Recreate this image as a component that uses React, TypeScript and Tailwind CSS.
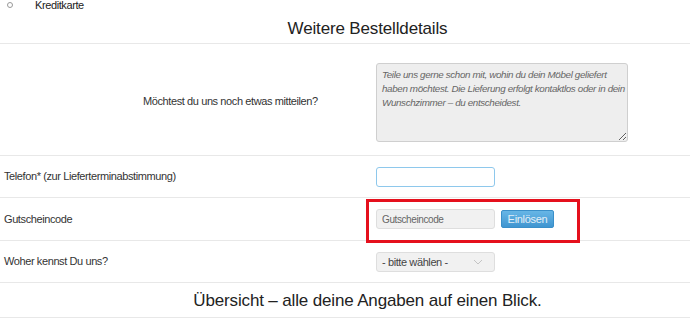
import React from "react";

const rowLine = "border-b border-[#e8e8e8]";
const heading = "text-center text-[17px] leading-[22px] tracking-[-0.15px] text-[#222]";

const messageHint =
  "Teile uns gerne schon mit, wohin du dein Möbel geliefert\nhaben möchtest. Die Lieferung erfolgt kontaktlos oder in dein\nWunschzimmer – du entscheidest.";

function Chevron() {
  return (
    <svg width="10" height="6" viewBox="0 0 10 6" className="shrink-0">
      <path d="M1 1l4 4 4-4" fill="none" stroke="#c4c4c4" strokeWidth="1" />
    </svg>
  );
}

export default function App() {
  return (
    <div className="w-[690px] h-[330px] overflow-hidden bg-white text-[#333] font-['Liberation_Sans',Arial,sans-serif] text-[11px] tracking-[-0.4px]">
      {/* payment option, cut off at the top */}
      <div className="flex items-center h-[12px] leading-[12px]">
        <span className="ml-[7px] -mt-[3px] w-[6px] h-[6px] rounded-full border border-[#999]" />
        <span className="ml-[22px] -mt-[2px] text-[#222]">Kreditkarte</span>
      </div>

      <h2 className={`mt-[6px] pl-[45px] pb-[3px] ${heading} ${rowLine}`}>Weitere Bestelldetails</h2>

      {/* message */}
      <div className={`grid grid-cols-[376px_1fr] ${rowLine}`}>
        <div className="flex items-center pl-[143px] pt-[3px]">Möchtest du uns noch etwas mitteilen?</div>
        <div className="pt-[19px] pb-[13px]">
          <textarea
            className="block w-[252px] h-[79px] overflow-hidden whitespace-pre rounded-[3px] border border-[#cfcfcf] bg-[#eeeeee] pl-[5px] pr-0 pt-[4px] pb-[4px] text-[9.8px] leading-[14px] tracking-[-0.35px] italic text-[#666] outline-none"
            defaultValue={messageHint}
          />
        </div>
      </div>

      {/* phone */}
      <div className={`grid grid-cols-[376px_1fr] ${rowLine}`}>
        <div className="flex items-center pl-[4px]">Telefon* (zur Lieferterminabstimmung)</div>
        <div className="pt-[11px] pb-[10px]">
          <input className="block w-[119px] h-[20px] rounded-[3px] border border-[#8ec8ec] bg-white outline-none" />
        </div>
      </div>

      {/* voucher */}
      <div className={`relative grid grid-cols-[376px_1fr] ${rowLine}`}>
        <div className="flex items-center pl-[4px]">Gutscheincode</div>
        <div className="flex items-center pt-[11px] pb-[11px]">
          <input
            className="block w-[119px] h-[20px] rounded-[3px] border border-[#dedede] bg-[#f1f1f1] px-[5px] text-[10px] outline-none placeholder:text-[#666]"
            placeholder="Gutscheincode"
          />
          <button className="ml-[6px] w-[53px] h-[18px] rounded-[2px] border border-[#3a8fc9] bg-gradient-to-b from-[#67b6e6] to-[#3f95d0] text-[11px] leading-[16px] tracking-[-0.3px] text-[#e3eff8]">
            Einlösen
          </button>
        </div>
        <div className="absolute top-[1px] left-[366px] w-[214px] h-[44px] border-[3px] border-[#e5101d]" />
      </div>

      {/* referral */}
      <div className={`grid grid-cols-[376px_1fr] ${rowLine}`}>
        <div className="flex items-center pl-[4px]">Woher kennst Du uns?</div>
        <div className="pt-[11px] pb-[10px]">
          <div className="flex items-center justify-between w-[119px] h-[20px] rounded-[3px] border border-[#dedede] bg-[#f1f1f1] pl-[5px] pr-[11px] text-[#444]">
            <span>- bitte wählen -</span>
            <Chevron />
          </div>
        </div>
      </div>

      <h2 className={`pt-[7px] pl-[45px] pb-[5px] ${heading} ${rowLine}`}>
        Übersicht – alle deine Angaben auf einen Blick.
      </h2>
    </div>
  );
}
